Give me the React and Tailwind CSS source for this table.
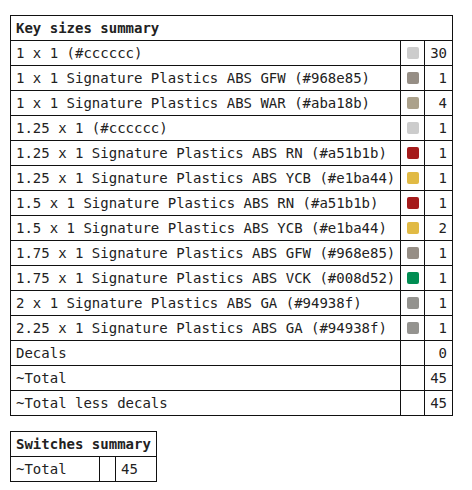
import React from 'react';

const keyRows = [
    { label: '1 x 1 (#cccccc)', color: '#cccccc', count: 30 },
    { label: '1 x 1 Signature Plastics ABS GFW (#968e85)', color: '#968e85', count: 1 },
    { label: '1 x 1 Signature Plastics ABS WAR (#aba18b)', color: '#aba18b', count: 4 },
    { label: '1.25 x 1 (#cccccc)', color: '#cccccc', count: 1 },
    { label: '1.25 x 1 Signature Plastics ABS RN (#a51b1b)', color: '#a51b1b', count: 1 },
    { label: '1.25 x 1 Signature Plastics ABS YCB (#e1ba44)', color: '#e1ba44', count: 1 },
    { label: '1.5 x 1 Signature Plastics ABS RN (#a51b1b)', color: '#a51b1b', count: 1 },
    { label: '1.5 x 1 Signature Plastics ABS YCB (#e1ba44)', color: '#e1ba44', count: 2 },
    { label: '1.75 x 1 Signature Plastics ABS GFW (#968e85)', color: '#968e85', count: 1 },
    { label: '1.75 x 1 Signature Plastics ABS VCK (#008d52)', color: '#008d52', count: 1 },
    { label: '2 x 1 Signature Plastics ABS GA (#94938f)', color: '#94938f', count: 1 },
    { label: '2.25 x 1 Signature Plastics ABS GA (#94938f)', color: '#94938f', count: 1 },
    { label: 'Decals', count: 0 },
    { label: '~Total', count: 45 },
    { label: '~Total less decals', count: 45 },
];

const cell = 'border border-[#111] px-[5px] py-0 h-[25px] leading-[20px]';

export default function App() {
    return (
        <div className="bg-white min-h-[490px] pt-[15px] pl-[10px] text-[14px] text-[#222] font-['DejaVu_Sans_Mono',monospace]">
            <table className="border-collapse w-[443px]">
                <tbody>
                    <tr>
                        <th colSpan={3} className={`${cell} text-left font-bold`}>
                            Key sizes summary
                        </th>
                    </tr>
                    {keyRows.map((row) => (
                        <tr key={row.label}>
                            <td className={`${cell} text-left whitespace-nowrap`}>{row.label}</td>
                            <td className={`${cell} w-[26px] !px-0`}>
                                {row.color && (
                                    <div
                                        className="w-[12px] h-[12px] rounded-[2px] mx-auto"
                                        style={{ backgroundColor: row.color }}
                                    />
                                )}
                            </td>
                            <td className={`${cell} w-[27px] text-right`}>{row.count}</td>
                        </tr>
                    ))}
                </tbody>
            </table>

            <table className="border-collapse mt-[15px]">
                <tbody>
                    <tr>
                        <th colSpan={3} className={`${cell} text-left font-bold whitespace-nowrap`}>
                            Switches summary
                        </th>
                    </tr>
                    <tr>
                        <td className={`${cell} text-left w-[89px]`}>~Total</td>
                        <td className={`${cell} w-[16px]`}></td>
                        <td className={`${cell} text-left`}>45</td>
                    </tr>
                </tbody>
            </table>
        </div>
    );
}
